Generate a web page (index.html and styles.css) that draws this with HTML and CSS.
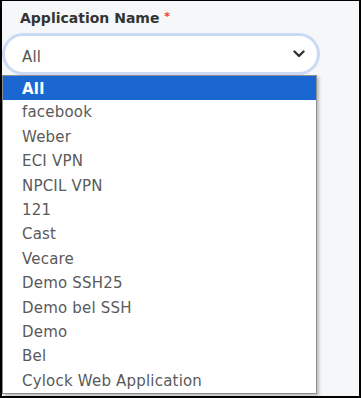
FILE: index.html
```html
<!DOCTYPE html>
<html>
<head>
<meta charset="utf-8">
<link rel="stylesheet" href="styles.css">
</head>
<body>
<div class="frame">
  <div class="field">
    <div class="label">Application Name <span class="req">*</span></div>
    <div class="row">
      <div class="select">
        <span class="value">All</span>
        <svg class="chev" width="12" height="8" viewBox="0 0 12 8"><polyline points="1.5,1.5 6,6 10.5,1.5" fill="none" stroke="#333" stroke-width="2.4" stroke-linecap="round" stroke-linejoin="round"/></svg>
      </div>
      <div class="next"></div>
    </div>
    <ul class="list">
      <li class="opt active">All</li>
      <li class="opt">facebook</li>
      <li class="opt">Weber</li>
      <li class="opt">ECI VPN</li>
      <li class="opt">NPCIL VPN</li>
      <li class="opt">121</li>
      <li class="opt">Cast</li>
      <li class="opt">Vecare</li>
      <li class="opt">Demo SSH25</li>
      <li class="opt">Demo bel SSH</li>
      <li class="opt">Demo</li>
      <li class="opt">Bel</li>
      <li class="opt">Cylock Web Application</li>
    </ul>
  </div>
</div>
</body>
</html>
```

FILE: styles.css
```css
html, body {
  margin: 0;
  padding: 0;
}
body {
  width: 361px;
  height: 398px;
  overflow: hidden;
  font-family: "DejaVu Sans", "Noto Sans", sans-serif;
}
.frame {
  box-sizing: border-box;
  width: 361px;
  height: 398px;
  border: 2px solid #000;
  border-top-width: 1px;
  background: #f6f7f9;
  overflow: hidden;
}
.field {
  padding-top: 6px;
}
.label {
  padding-left: 18px;
  font-size: 14px;
  font-weight: 700;
  color: #343434;
  line-height: 20px;
}
.req {
  color: #ee3b3b;
  font-size: 11px;
  vertical-align: 3px;
}
.row {
  display: flex;
  align-items: center;
  margin-top: 8px;
  gap: 45px;
}
.select {
  flex: none;
  box-sizing: border-box;
  width: 312px;
  height: 36px;
  margin-left: 3px;
  background: #fff;
  border-radius: 18px;
  box-shadow: 0 0 0 3px #cad9f6;
  display: flex;
  align-items: center;
  justify-content: space-between;
  padding: 0 12px 0 17px;
}
.value {
  font-size: 15px;
  letter-spacing: 0.2px;
  color: #555;
  padding-top: 5px;
}
.chev {
  display: block;
}
.next {
  flex: none;
  width: 30px;
  height: 22px;
  border: 1.5px solid #d9dce2;
  border-radius: 12px;
  background: #f8f9fb;
}
.list {
  list-style: none;
  margin: 3px 0 0 0;
  padding: 0;
  width: 315px;
  box-sizing: border-box;
  background: #fff;
  border: 1px solid #8f8f8f;
  box-shadow: 2px 2px 3px rgba(0,0,0,0.25);
}
.opt {
  height: 24.4px;
  line-height: 24.4px;
  padding-left: 19px;
  font-size: 15px;
  letter-spacing: 0.2px;
  color: #5a5a5a;
  white-space: nowrap;
}
.opt.active {
  background: #1b67d1;
  color: #fff;
  font-weight: 700;
  line-height: 26px;
}
```
